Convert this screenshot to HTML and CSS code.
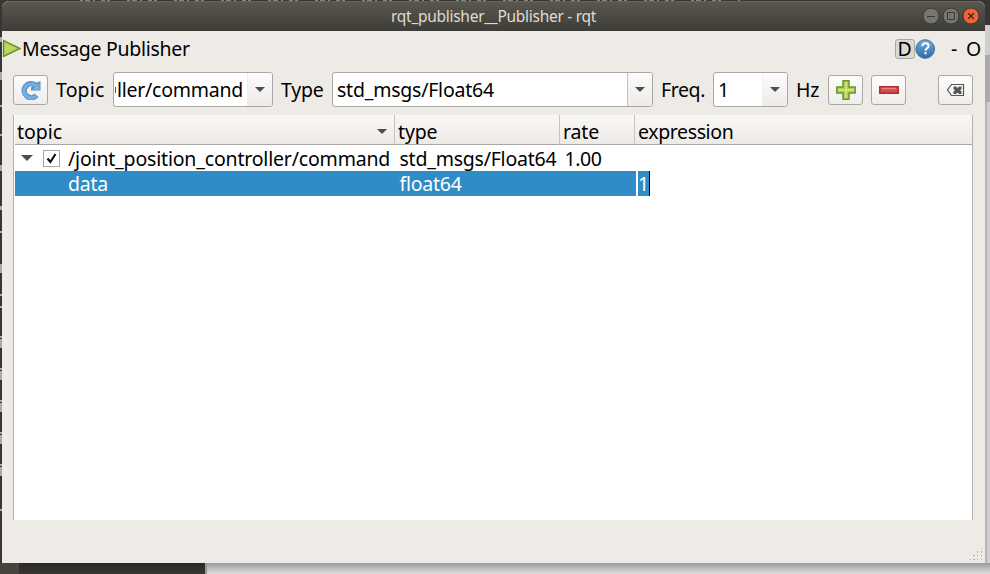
FILE: index.html
```html
<!DOCTYPE html>
<html lang="en">
<head>
<meta charset="utf-8">
<title>rqt_publisher__Publisher - rqt</title>
<link rel="stylesheet" href="styles.css">
</head>
<body>
<svg class="desktop" width="990" height="574" aria-hidden="true">
  <defs>
    <linearGradient id="sh" x1="0" x2="0" y1="0" y2="1"><stop offset="0" stop-color="#999"/><stop offset="1" stop-color="#dedede"/></linearGradient>
    <linearGradient id="dk" x1="0" x2="0" y1="0" y2="1"><stop offset="0" stop-color="#292925"/><stop offset="1" stop-color="#393833"/></linearGradient>
  </defs>
  <rect width="990" height="574" fill="#373632"/>
  <path d="M80 .5H740" stroke="#85847e" stroke-dasharray="3 2 5 3 2 6 4 2 3 17"/>
  <rect x="985" y="25" width="5" height="549" fill="#cecece"/>
  <rect x="985" y="55" width="5" height="47" fill="#aaa"/>
  <rect x="985" y="102" width="2" height="461" fill="#b5b5b5"/>
  <path d="M0 37h2v5H0zM0 72h2v8H0zM0 105h2v2H0zM0 134h2v2H0zM0 165h2v6H0zM0 206h2v4H0zM0 231h2v2H0zM0 264h2v9H0zM0 294h2v2H0zM0 306h2v2H0zM0 336h2v2H0zM0 339h2v9H0zM0 368h2v2H0zM0 371h2v9H0zM0 400h2v2H0zM0 403h2v9H0zM0 432h2v2H0zM0 435h2v9H0zM0 464h2v2H0zM0 467h2v9H0zM0 509h2v2H0z" fill="#aaa"/>
  <rect y="563" width="19" height="11" fill="#45443d"/>
  <rect x="19" y="563" width="186" height="11" fill="url(#dk)"/>
  <rect x="205" y="563" width="785" height="11" fill="url(#sh)"/>
  <rect x="205" y="563" width="2" height="11" fill="#999"/>
</svg>
<main class="window">
  <header class="titlebar">
    <span class="caption">rqt_publisher__Publisher - rqt</span>
    <div class="controls">
      <svg width="18" height="18" viewBox="0 0 18 18"><circle cx="9" cy="9" r="8" fill="#777570" stroke="#383732"/><path d="M5 9.5h8" stroke="#393833"/></svg>
      <svg width="18" height="18" viewBox="0 0 18 18"><circle cx="9" cy="9" r="8" fill="#777570" stroke="#383732"/><path d="M5.5 5.5h7v7h-7z" fill="none" stroke="#393833"/></svg>
      <svg width="18" height="18" viewBox="0 0 18 18"><circle cx="9" cy="9" r="8" fill="#ee6339" stroke="#383732"/><path d="M6.3 6.3l5.4 5.4M11.7 6.3l-5.4 5.4" stroke="#3c2118" stroke-width="1.3"/></svg>
    </div>
  </header>
  <div class="heading">
    <svg class="play" width="19" height="20" viewBox="0 0 19 20"><path d="M1.5 1.5v16L18 9.5z" fill="#a7cc52" stroke="#558a27" stroke-width="1.2"/><path d="M3 4v11l11-5.4z" fill="#bbd85c"/></svg>
    <span class="t-heading">Message Publisher</span>
    <div class="dock">
      <span class="dock-d">D</span>
      <svg width="21" height="20" viewBox="0 0 21 20"><defs><linearGradient id="hb" x1="0" x2="0" y1="0" y2="1"><stop offset="0" stop-color="#78a9d7"/><stop offset="1" stop-color="#2f6ca8"/></linearGradient></defs><circle cx="10.2" cy="10" r="9.3" fill="url(#hb)" stroke="#3872a8"/><path d="M7.3 7.2q.2-2.900 3.200-2.900 3.100 0 3.100 2.600 0 1.400-1.700 2.400-1.400.9-1.400 2.400" fill="none" stroke="#fff" stroke-width="2"/><rect x="9.500" y="13" width="2" height="2.200" fill="#fff"/></svg>
      <span class="dash">-</span><span class="oh">O</span>
    </div>
  </div>
  <div class="toolbar">
    <span class="button b-refresh"><svg width="20" height="20" viewBox="0 0 20 20"><path d="M15.500 15.300A7 7 0 1 1 14 4.800" fill="none" stroke="#5c93c9" stroke-width="5.500"/><path d="M13.500 3.500L19.500 1v9.500H10V7.500z" fill="#5c93c9"/><path d="M15 15.800A7 7 0 1 1 13.500 4.800L17 6.800" fill="none" stroke="#7aaedd" stroke-width="3.200"/><path d="M18.500 3v6.500H11.500z" fill="#7aaedd"/></svg></span>
    <span class="label l-topic">Topic</span>
    <span class="combo c-topic"><span class="field"><i class="clipped"></i><span class="t-topic">ller/command</span></span><span class="drop"></span></span>
    <span class="label l-type">Type</span>
    <span class="combo c-type"><span class="field"><span class="t-msg">std_msgs/Float64</span></span><span class="drop"></span></span>
    <span class="label l-freq">Freq.</span>
    <span class="combo c-freq"><span class="field">1</span><span class="drop"></span></span>
    <span class="label l-hz">Hz</span>
    <span class="button b-add"><svg width="20" height="20" viewBox="0 0 20 20"><path d="M7 .8h6V7h6.200v6H13v6.200H7V13H.8V7H7z" fill="#b2d044" stroke="#679634" stroke-width="1.500"/><path d="M10 2v16M2 10h16" stroke="#d8e88c" stroke-width="1.500"/></svg></span>
    <span class="button b-remove"><svg width="20" height="20" viewBox="0 0 20 20"><path d="M.8 6.800h18.400v6.400H.8z" fill="#da4a49" stroke="#a62f34" stroke-width="1.500"/><path d="M2.500 8.500h15" stroke="#e98281" stroke-width="1.500"/></svg></span>
    <span class="button b-clear"><svg width="20" height="20" viewBox="0 0 20 20"><path d="M5.500 4.500h12v11h-12L1.500 10z" fill="none" stroke="#555" stroke-width="1.200"/><path d="M7.500 6.500H10l1.500 1.500L13 6.500h2.500V9L14 10.200l1.500 1.300V14H13l-1.500-1.500L10 14H7.500v-2.500L9 10.200 7.500 9z" fill="#555"/></svg></span>
  </div>
  <section class="tree">
    <div class="row head">
      <div class="cell"><span class="h-topic">topic</span><i class="arrow sort"></i></div>
      <div class="cell"><span class="h-type">type</span></div>
      <div class="cell"><span class="h-rate">rate</span></div>
      <div class="cell"><span class="h-expr">expression</span></div>
    </div>
    <div class="row item">
      <div class="cell first"><i class="arrow expand"></i><span class="check"><svg width="15" height="15" viewBox="0 0 15 15"><path d="M3.500 7.500L6.400 11 11.500 3" fill="none" stroke="#111" stroke-width="2.200"/></svg></span><span class="t-path">/joint_position_controller/command</span></div>
      <div class="cell"><span class="t-msg">std_msgs/Float64</span></div>
      <div class="cell"><span class="t-rate">1.00</span></div>
      <div class="cell"></div>
    </div>
    <div class="row item selected">
      <div class="cell indent"><span class="t-data">data</span></div>
      <div class="cell"><span class="t-float">float64</span></div>
      <div class="cell"></div>
      <div class="cell edit"><span class="editor">1</span></div>
    </div>
  </section>
  <footer class="status">
    <svg width="14" height="16" viewBox="0 0 14 16"><path d="M11 2h1v1h-1zM7 5h1v2H7zM11 5h1v2h-1zM3 9h2v1H3zM7 9h1v1H7zM11 9h1v1h-1zM0 13h1v1H0zM3 13h2v1H3zM7 13h1v1H7zM11 13h1v1h-1z" fill="#b3b0ac"/></svg>
  </footer>
</main>
</body>
</html>
```
FILE: styles.css
```css
* { box-sizing: border-box; }
body { margin: 0; width: 990px; height: 574px; overflow: hidden; font: 19.5px/26px "Noto Sans", "Open Sans", sans-serif; color: #000; }
svg { display: block; flex: none; }
span { white-space: pre; }
.desktop { position: absolute; z-index: -1; }
.window { margin: 1px 0 0 2px; width: 983px; height: 562px; background: #eeebe6; border-radius: 7px 7px 0 0; display: flex; flex-direction: column; }
.titlebar { height: 30px; background: linear-gradient(#5a574e, #3d3c37); border-top: 1px solid #66635a; border-radius: 7px 7px 0 0; display: grid; grid-template-columns: 389px 1fr 58px; padding-right: 5px; align-items: center; }
.caption { grid-column: 2; font-size: 15.5px; letter-spacing: -.28px; color: #dfdbd2; line-height: 20px; padding-bottom: 1px; }
.controls { display: flex; gap: 2px; padding-bottom: 1px; }
.heading { height: 41px; display: flex; padding-top: 5px; }
.play { margin: 3px 1px 0 0; }
.t-heading { letter-spacing: -.29px; }
.t-path { letter-spacing: -.18px; }
.t-msg { letter-spacing: -.22px; }
.t-topic { letter-spacing: -.25px; }
.t-float { letter-spacing: -.25px; }
.t-data { letter-spacing: -.2px; }
.t-rate { letter-spacing: -.4px; }
.h-expr { letter-spacing: -.38px; }
.h-type, .h-rate { letter-spacing: -.15px; }
.dock { display: flex; margin-left: auto; width: 90px; }
.dock svg { margin-top: 3px; }
.dock-d { width: 20px; height: 20px; margin-top: 3px; border: 1px solid #aaa7a2; border-radius: 3px; background: #dcd9d5; line-height: 18px; text-indent: -1px; text-align: center; }
.dash { margin-left: 15px; width: 15px; }
.toolbar { height: 35px; display: flex; align-items: center; padding-left: 11px; }
.button { width: 35px; height: 30px; border: 1px solid #aaa8a5; border-radius: 3px; background: linear-gradient(#fdfdfc, #efedeb); display: flex; align-items: center; justify-content: center; flex: none; }
.combo { height: 35px; border: 1px solid #aaa8a5; border-radius: 3px; background: #fff; display: flex; flex: none; overflow: hidden; }
.field { flex: 1; display: flex; align-items: center; padding-left: 4px; overflow: hidden; }
.drop { width: 25px; border-left: 1px solid #c4c1bd; background: linear-gradient(#fcfbfb, #eeecea); display: flex; align-items: center; justify-content: center; padding-right: 1px; }
.drop::before, .arrow { content: ""; border: 5px solid transparent; border-top-color: #4d4d4a; border-bottom: 0; }
.label { flex: none; }
.l-topic { margin-left: 8px; width: 57px; letter-spacing: .15px; }
.c-topic { width: 160px; }
.c-topic .drop, .c-freq .drop { border-left-color: #f0efed; }
.c-topic .field { padding-left: 1px; }
.clipped { width: 1px; height: 6px; background: #2b5c91; margin-right: 1px; }
.l-type { margin-left: 8px; width: 51px; letter-spacing: -.2px; }
.c-type { width: 321px; }
.l-freq { margin-left: 8px; width: 52px; letter-spacing: -.4px; }
.c-freq { width: 75px; }
.l-hz { margin-left: 8px; width: 32px; letter-spacing: -.3px; }
.b-remove { margin-left: 8px; }
.b-clear { margin-left: 32px; }
.tree { width: 960px; height: 405px; margin: 8px 0 0 11px; border: solid #b5b2ae; border-width: 0 1px; background: #fff; padding-left: 1px; }
.row { display: grid; grid-template-columns: 380px 165px 75px 1fr; }
.head { grid-template-columns: 379px 165px 75px 1fr; height: 30px; background: linear-gradient(#faf8f6, #edeae6); border-bottom: 1px solid #aaa7a3; margin-bottom: 1px; }
.head .cell { padding: 4px 0 0 3px; border-left: 1px solid #c7c3be; display: flex; }
.head .cell:first-child { border: 0; padding-left: 2px; }
.sort { margin: 10px 7px 0 auto; height: 5px; }
.item { height: 25px; line-height: 25px; }
.item .cell { padding-left: 4.5px; display: flex; align-items: center; }
.item .first { padding-left: 6px; }
.expand { border-width: 6px 6px 0; margin: 0 11px 2px 0; }
.item .check { width: 17px; height: 17px; border: 1px solid #aaa7a2; margin: 0 8px 0 -1px; }
.item .indent { padding-left: 53px; }
.selected { color: #fff; background: linear-gradient(90deg, #308cc6 621px, #fff 621px); }
.item .edit { padding-left: 3px; }
.editor { background: #308cc6; width: 12px; height: 25px; border-right: 1px solid #000; }
.status { flex: 1; display: flex; justify-content: flex-end; align-items: flex-end; padding: 0 1px 1px 0; }
```
